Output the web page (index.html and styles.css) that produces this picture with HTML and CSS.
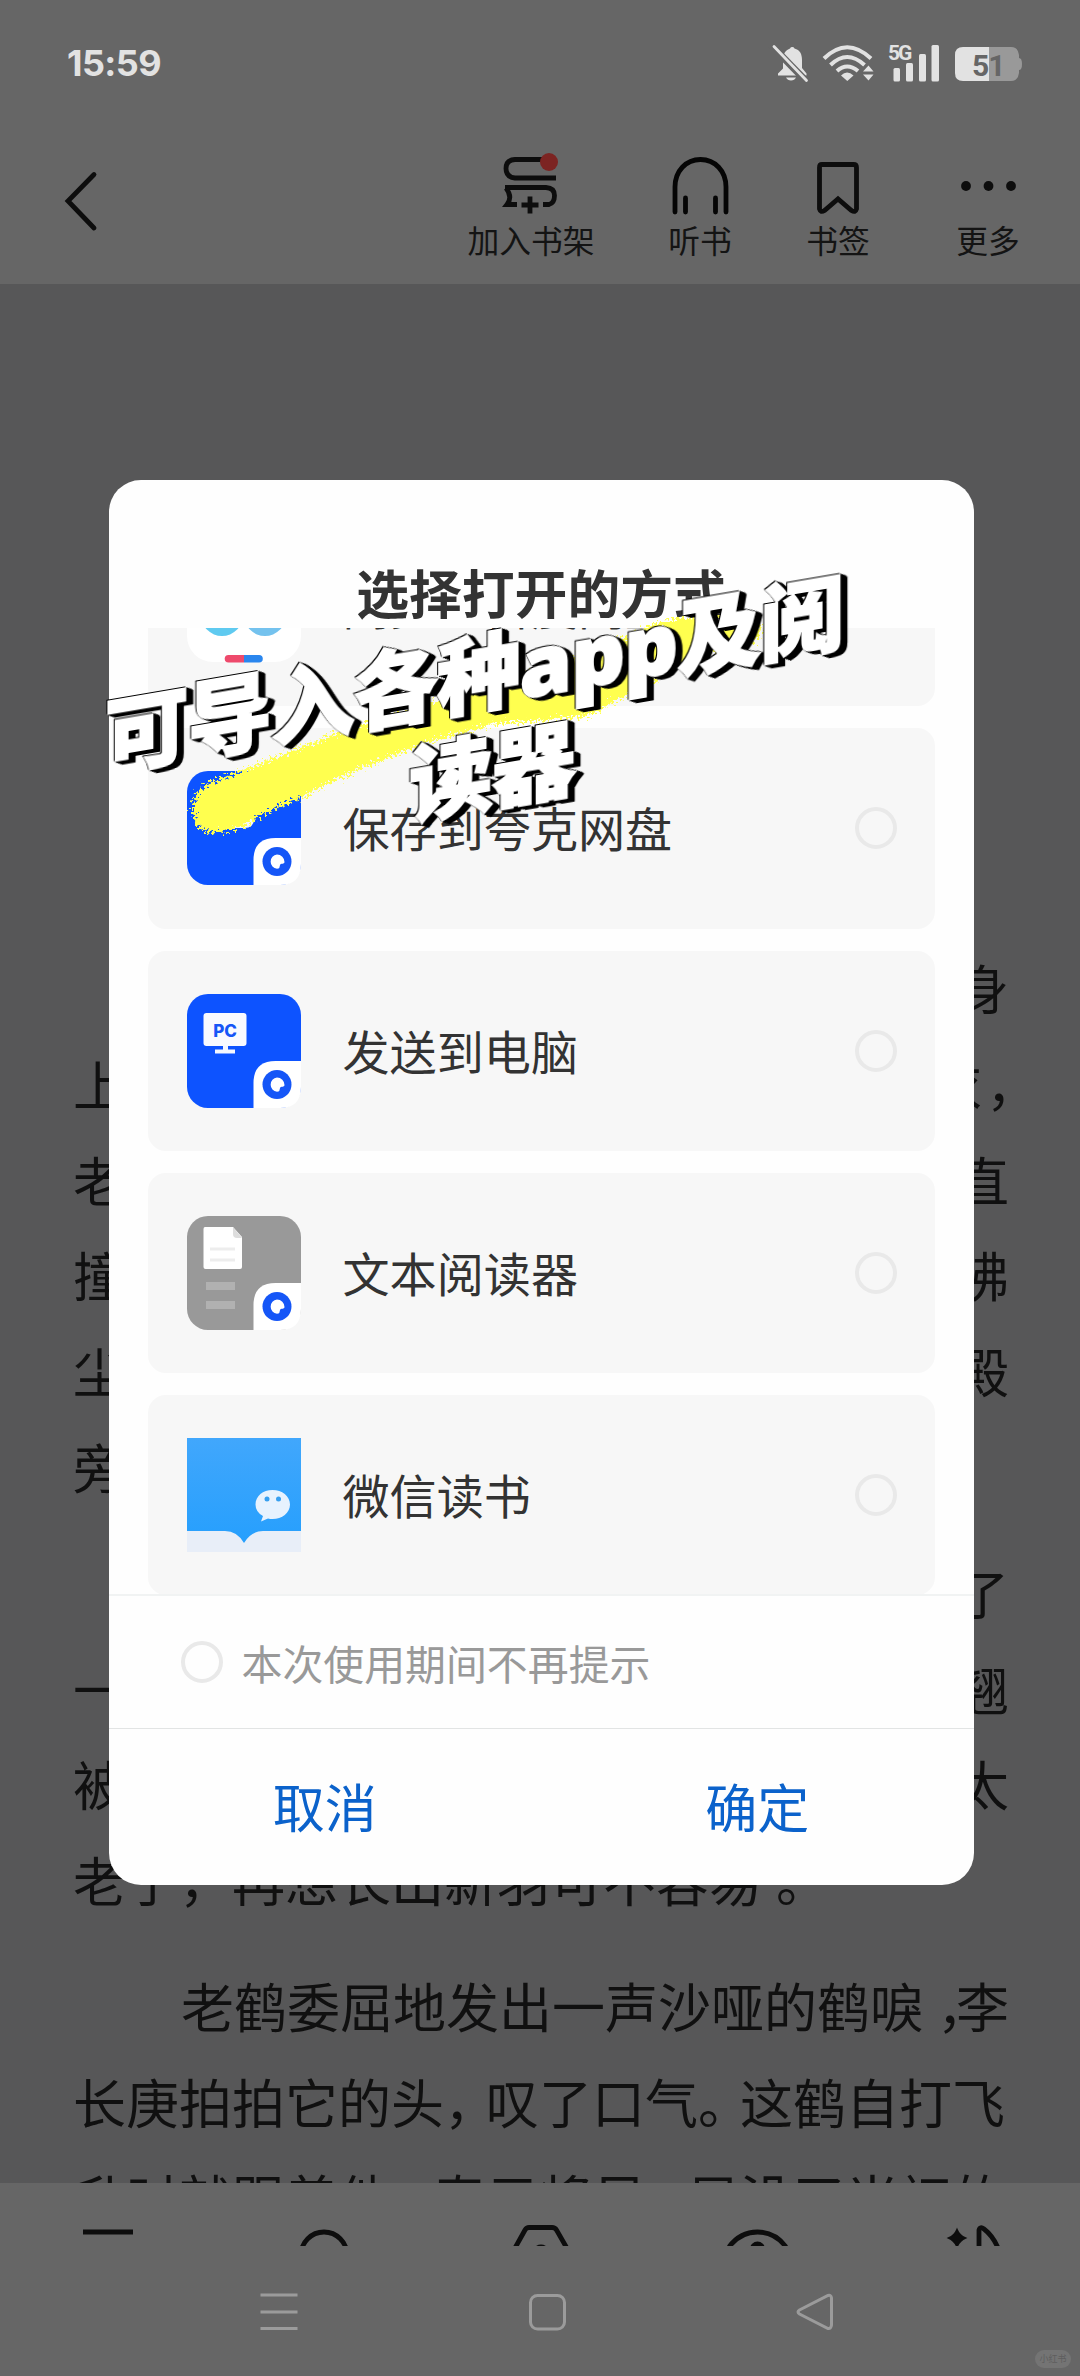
FILE: index.html
```html
<!DOCTYPE html>
<html lang="zh-CN">
<head>
<meta charset="utf-8">
<title>选择打开的方式</title>
<link rel="stylesheet" href="styles.css">
</head>
<body>
<div class="phone">
  <header class="top">
    <div class="status">
      <span class="clock">15:59</span>
      <svg class="status-icons" width="260" height="50" viewBox="766 40 260 50">
        <g fill="#e2e2e2">
          <path d="M777 75.500v-2l5-5V60c0-7 3-10 7-11.500a2.500 2.500 0 0 1 4.500 0C799 50 801 54 801 60v8l4.500 5.500v2z"/>
          <path d="M785 77.500h10q-1.500 3-5 3t-5-3z"/>
          <path d="M770 45L807 83" stroke="#666" stroke-width="7"/>
          <path d="M773 46.500L805.500 80.500" stroke="#e2e2e2" stroke-width="2.800" stroke-linecap="round"/>
          <g fill="none" stroke="#e2e2e2" stroke-width="4">
            <path d="M823 58.500Q846 36 870 58.500"/>
            <path d="M829.500 65Q846 49 863.500 65"/>
            <path d="M836 71Q846 62 857 71"/>
          </g>
          <path d="M840 75.500q6-6 12.500 0L846.300 81z"/>
          <path d="M862 71.500l5.500-6 5 6zM862 74.500h10.500l-5 6z"/>
          <rect x="892.500" y="68" width="6.500" height="13.500" rx="1.500"/>
          <rect x="905" y="63" width="7" height="18.500" rx="1.500"/>
          <rect x="918" y="54" width="7" height="27.500" rx="1.500"/>
          <rect x="930.500" y="45" width="7.500" height="36.500" rx="1.500"/>
          <path d="M962 47h26v34h-26q-8 0-8-8V55q0-8 8-8z"/>
        </g>
        <path d="M988 47h22q7 0 8 8v3q3 0 3 6t-3 6v3q-1 8-8 8h-22z" fill="#999"/>
        <text x="887" y="60" class="net">5G</text>
        <text x="971" y="75.500" class="batt">51</text>
      </svg>
    </div>
    <nav class="tools">
      <svg class="back" width="40" height="70" viewBox="60 166 40 70"><path d="M94 174.500L68 201L94 228"/></svg>
      <div class="tool shelf">
        <svg width="70" height="66" viewBox="496 152 70 66">
          <path d="M555 159.500H515Q506 160 506 168.500T515 178H556"/>
          <path d="M505 187.500H546Q554.500 188 554.500 195.500T549 204.500H543"/>
          <path d="M506 188Q513 197 507 204.500H517"/>
          <path d="M530 196.500V213.500M521.500 205H538.500"/>
          <circle cx="549" cy="162" r="9" fill="#7c2422" stroke="none"/>
        </svg>
        <span>加入书架</span>
      </div>
      <div class="tool listen">
        <svg width="70" height="66" viewBox="665 152 70 66"><path d="M675 212V187C675 171 686 159.500 700.500 159.500S726 171 726 187V212M685.500 198V212M715.500 198V212" stroke-linecap="round" stroke="#050505"/></svg>
        <span>听书</span>
      </div>
      <div class="tool mark">
        <svg width="70" height="66" viewBox="803 152 70 66"><path d="M822 164.500H853.500Q856.500 164.500 856.500 167.500V209Q855.500 213 851.500 210.500L838 199L824.500 210.500Q820.500 213 819.500 209V167.500Q819.500 164.500 822 164.500Z"/></svg>
        <span>书签</span>
      </div>
      <div class="tool more">
        <svg width="70" height="66" viewBox="953 152 70 66"><g fill="#0d0d0d" stroke="none"><circle cx="966" cy="186" r="4.900"/><circle cx="988.500" cy="186" r="4.900"/><circle cx="1011" cy="186" r="4.900"/></g></svg>
        <span>更多</span>
      </div>
    </nav>
  </header>

  <main class="page">
    <div class="para">
      <p class="edge"><span></span><span>身</span></p>
      <p class="edge"><span>上</span><span>衣<i class="far">，</i></span></p>
      <p class="edge"><span>老</span><span>直</span></p>
      <p class="edge"><span>撞</span><span>拂</span></p>
      <p class="edge"><span>尘</span><span>殿</span></p>
      <p class="edge"><span>旁</span><span></span></p>
    </div>
    <div class="para">
      <p class="edge"><span></span><span>了</span></p>
      <p class="edge"><span>一</span><span>翘</span></p>
      <p class="edge"><span>被</span><span>太</span></p>
      <p>老了<i class="full">，</i>再想长出新羽可不容易<i class="full stop">。</i></p>
    </div>
    <div class="para">
      <p class="indent">老鹤委屈地发出一声沙哑的鹤唳<i class="near">，</i>李</p>
      <p>长庚拍拍它的头<i>，</i>叹了口气<i>。</i>这鹤自打飞</p>
      <p>升时就跟着他<i>，</i>寿元将尽<i>，</i>早没了当初的</p>
    </div>
  </main>

  <footer class="bottom">
    <svg class="reader-tools" width="1080" height="63" viewBox="0 2183 1080 63">
      <path d="M83 2232H133"/>
      <circle cx="324" cy="2255" r="23"/>
      <path d="M510 2257L525 2230Q526.500 2227.500 529 2227.500H552Q555 2227.500 556.500 2230L572 2257"/>
      <path d="M533 2252Q541 2242 549 2252" />
      <path d="M729 2247Q740 2232 757.500 2232T786 2247"/>
      <circle cx="757.500" cy="2249" r="7.500" fill="#0a0a0a" stroke="none"/>
      <path d="M957 2229.500Q959.500 2235.500 965.500 2238Q959.500 2240.500 957 2247Q954.500 2240.500 948.500 2238Q954.500 2235.500 957 2229.500Z" fill="#0d0d0d" stroke-width="1.500"/>
      <path d="M979 2250V2230Q980 2226 984 2229Q993 2236 998 2248"/>
    </svg>
    <div class="sysnav">
      <svg width="40" height="40" viewBox="0 0 40 40"><path d="M1.500 3H38.500M1.500 20H38.500M1.500 36.500H38.500"/></svg>
      <svg width="40" height="40" viewBox="0 0 40 40"><rect x="3.500" y="3.500" width="34" height="33.500" rx="7"/></svg>
      <svg width="40" height="40" viewBox="0 0 40 40"><path d="M33 3.500Q36 2.500 36.500 6V33Q36 37 33 36.500L4.500 22Q1.500 20 4.500 18Z"/></svg>
    </div>
    <span class="brand">小红书</span>
  </footer>

  <section class="dialog">
    <h1>选择打开的方式</h1>
    <div class="apps">
      <div class="app">
        <svg width="114" height="114" viewBox="0 0 114 114">
          <rect width="114" height="113" rx="26" fill="#fff"/>
          <circle cx="35" cy="66" r="21" fill="#5fcaf0"/><circle cx="78" cy="66" r="21" fill="#74c2ee"/>
          <path d="M57 106H41.500a3.800 3.800 0 0 0 0 7.600H57z" fill="#ee4a6c"/><path d="M57 106H72a3.800 3.800 0 0 1 0 7.600H57z" fill="#2a86ee"/>
        </svg>
        <span class="name">同步至百度网盘</span><span class="radio"></span>
      </div>
      <div class="app">
        <svg width="114" height="114" viewBox="0 0 114 114">
          <rect width="114" height="114" rx="21" fill="#0d53ff"/>
          <path d="M25 57Q15 57 15 47T26 37Q32 27 43 31Q51 34 52 40Q67 38 67 48Q67 57 57 57Z" fill="#f4f7ff"/>
          <path d="M66.500 114V89Q66.500 67 88.500 67H114V93Q114 114 93 114Z" fill="#fff"/>
          <circle cx="90" cy="90.500" r="14.500" fill="#1556f7"/>
          <path d="M90 83.500a7.500 7.500 0 0 1 7.500 7.500q0 1.800-3 1.800q-1.800 0-1.800 2.500q0 2.500-2.700 2.500a7.200 7.200 0 0 1 0-14.300z" fill="#fff"/>
        </svg>
        <span class="name">保存到夸克网盘</span><span class="radio"></span>
      </div>
      <div class="app">
        <svg width="114" height="114" viewBox="0 0 114 114">
          <rect width="114" height="114" rx="21" fill="#0d53ff"/>
          <rect x="16.500" y="19" width="43" height="33" rx="3" fill="#f8faff"/>
          <path d="M36 52h5v3.500h7v4H28v-4h8z" fill="#f4f7ff"/>
          <text x="38" y="43" class="pc">PC</text>
          <path d="M66.500 114V89Q66.500 67 88.500 67H114V93Q114 114 93 114Z" fill="#fff"/>
          <circle cx="90" cy="90.500" r="14.500" fill="#1556f7"/>
          <path d="M90 83.500a7.500 7.500 0 0 1 7.500 7.500q0 1.800-3 1.800q-1.800 0-1.800 2.500q0 2.500-2.700 2.500a7.200 7.200 0 0 1 0-14.300z" fill="#fff"/>
        </svg>
        <span class="name">发送到电脑</span><span class="radio"></span>
      </div>
      <div class="app">
        <svg width="114" height="114" viewBox="0 0 114 114">
          <rect width="114" height="114" rx="21" fill="#999"/>
          <path d="M18 11H46L55 21V51q0 2-2 2H18.500q-2 0-2-2V13q0-2 1.500-2z" fill="#fff"/>
          <path d="M46 11V18q0 4 4 4h5z" fill="#ddd"/>
          <path d="M23 33H48M23 44H48" stroke="#ededed" stroke-width="3"/>
          <path d="M19 70H48M19 89H48" stroke="#b1b1b1" stroke-width="8"/>
          <path d="M66.500 114V89Q66.500 67 88.500 67H114V93Q114 114 93 114Z" fill="#fff"/>
          <circle cx="90" cy="90.500" r="14.500" fill="#1556f7"/>
          <path d="M90 83.500a7.500 7.500 0 0 1 7.500 7.500q0 1.800-3 1.800q-1.800 0-1.800 2.500q0 2.500-2.700 2.500a7.200 7.200 0 0 1 0-14.300z" fill="#fff"/>
        </svg>
        <span class="name">文本阅读器</span><span class="radio"></span>
      </div>
      <div class="app">
        <svg width="114" height="114" viewBox="0 0 114 114">
          <defs><linearGradient id="sky" x2="0" y2="1"><stop stop-color="#41a7fc"/><stop offset="1" stop-color="#269ffd"/></linearGradient></defs>
          <rect width="114" height="114" fill="#e8eef8"/>
          <path d="M0 0H114V93H76Q64 93 57 105Q50 93 38 93H0Z" fill="url(#sky)"/>
          <path d="M85.500 52C76 52 68.500 58 68.500 66.500Q68.500 74 76 78L74 83.500L81 80.500Q83 81 85.500 81C95 81 103 75 103 66.500S95 52 85.500 52Z" fill="#e7f2fe"/>
          <circle cx="80" cy="61" r="2.500" fill="#379ff0"/><circle cx="91.500" cy="61" r="2.500" fill="#379ff0"/>
        </svg>
        <span class="name">微信读书</span><span class="radio"></span>
      </div>
    </div>
    <div class="remember"><span class="radio"></span><span>本次使用期间不再提示</span></div>
    <div class="actions"><span>取消</span><span>确定</span></div>
  </section>

  <svg class="brush" width="640" height="250" viewBox="170 600 640 250">
    <defs><filter id="rough" x="-5%" y="-10%" width="110%" height="120%">
      <feTurbulence type="fractalNoise" baseFrequency="0.4" numOctaves="2" seed="4"/>
      <feDisplacementMap in="SourceGraphic" scale="18" xChannelSelector="R" yChannelSelector="G"/>
    </filter></defs>
    <path filter="url(#rough)" fill="#ffff50" d="M193 808Q194 786 215 781Q290 752 350 728Q430 704 530 672Q600 650 660 622Q700 612 758 622Q766 632 752 642Q700 650 665 675Q630 694 587 716Q530 722 488 725Q472 732 456 734Q420 744 388 758Q330 780 300 799Q270 808 245 826Q220 834 206 832Q192 826 193 808Z"/>
  </svg>
  <div class="caption"><div>可导入各种app及阅</div><div class="second">读器</div></div>
</div>
</body>
</html>
```
FILE: styles.css
```css
body {
  margin: 0;
  font-family: Inter, "Noto Sans CJK SC", sans-serif;
}

.phone {
  position: relative;
  display: flex;
  flex-direction: column;
  width: 1080px;
  height: 2376px;
  overflow: hidden;
  background: #575758;
}

.top {
  box-sizing: border-box;
  flex: none;
  height: 284px;
  padding-top: 40px;
  background: #666;
}

.status {
  display: flex;
  justify-content: space-between;
  height: 50px;
  padding: 0 53px 0 67px;
}

.clock {
  color: #e2e2e2;
  font: 700 36px/46px Inter, sans-serif;
  letter-spacing: -0.600px;
}

.net {
  fill: #e2e2e2;
  font: 700 21px "Liberation Sans Narrow", Roboto, sans-serif;
  letter-spacing: -2px;
}

.batt {
  fill: #666;
  font: 700 30px Roboto, sans-serif;
  letter-spacing: -1px;
}

.tools {
  display: flex;
  align-items: flex-start;
  padding: 62px 28px 0 60px;
}

.back {
  margin-top: 14px;
  margin-right: 367px;
}

.tools svg,
.reader-tools {
  fill: none;
  stroke: #0d0d0d;
  stroke-width: 4.800;
}

.back path {
  stroke-linecap: round;
}

.tool {
  display: flex;
  flex-direction: column;
  align-items: center;
  gap: 3px;
  width: 128px;
  color: #141414;
  font-size: 31.800px;
  line-height: 42px;
}

.listen { margin-left: 41px; }
.mark { margin-left: 10px; }
.more { margin-left: 22px; }

.page {
  display: flex;
  flex: 1;
  flex-direction: column;
  gap: 30px;
  min-height: 0;
  padding: 656px 71px 0 73px;
  overflow: hidden;
  color: #101010;
  font: 53px/95.800px "Noto Sans CJK SC", sans-serif;
  white-space: nowrap;
}

.page p {
  margin: 0;
  height: 95.800px;
}

.page i {
  display: inline-block;
  width: 42px;
  font-style: normal;
}

.page .full { width: 53px; }
.page .stop { text-indent: 14px; }
.page .far { text-indent: 4px; width: 27px; }
.page .near { box-sizing: border-box; width: 33px; text-indent: 14px; }
.page .indent { padding-left: 108px; }

.page .edge {
  display: flex;
  justify-content: space-between;
}

.bottom {
  position: relative;
  flex: none;
  height: 193px;
  background: #666;
}

.reader-tools {
  display: block;
}

.sysnav {
  display: flex;
  justify-content: space-between;
  width: 576px;
  padding: 46px 0 0 259px;
}

.sysnav svg {
  fill: none;
  stroke: #9b9b9b;
  stroke-width: 3;
}

.brand {
  position: absolute;
  right: 9px;
  bottom: 8px;
  width: 36px;
  border-radius: 9px;
  background: #747474;
  color: #5e5e5e;
  font-size: 9px;
  line-height: 18px;
  text-align: center;
}

.dialog {
  position: absolute;
  top: 480px;
  left: 108.500px;
  display: flex;
  flex-direction: column;
  width: 865px;
  height: 1405px;
  overflow: hidden;
  border-radius: 32px;
  background: #fefefe;
}

.dialog h1 {
  flex: none;
  height: 69px;
  margin: 0;
  padding-top: 79px;
  color: #333;
  font: 700 52.800px/64px "Noto Sans CJK SC", sans-serif;
  text-align: center;
}

.apps {
  display: flex;
  flex: none;
  flex-direction: column;
  gap: 22px;
  box-sizing: border-box;
  height: 968px;
  padding: 0 39px;
  overflow: hidden;
  border-bottom: 2px solid #f1f3f3;
}

.app {
  display: flex;
  flex: none;
  align-items: center;
  box-sizing: border-box;
  height: 200.300px;
  padding: 0 38px 0 39px;
  border-radius: 18px;
  background: #f7f7f7;
}

.app:first-child {
  margin-top: -122px;
}

.name {
  flex: 1;
  margin-left: 42px;
  padding-top: 4px;
  color: #333;
  font-size: 47.100px;
  line-height: 60px;
}

.radio {
  box-sizing: border-box;
  width: 42px;
  height: 42px;
  border: 4px solid #e9e9e9;
  border-radius: 50%;
}

.pc {
  fill: #1556f7;
  font: 800 17px Inter, sans-serif;
  text-anchor: middle;
}

.remember {
  display: flex;
  flex: none;
  align-items: center;
  gap: 19px;
  height: 132px;
  padding-left: 72px;
  border-bottom: 1.500px solid #e2e4e4;
  color: #999;
  font-size: 40.900px;
}

.actions {
  display: grid;
  flex: 1;
  grid-template-columns: 1fr 1fr;
  align-items: center;
  padding-bottom: 3px;
  color: #0b62cb;
  font-size: 52px;
  text-align: center;
}

.brush {
  position: absolute;
  top: 600px;
  left: 170px;
}

.caption {
  position: absolute;
  top: 624px;
  left: 104px;
  width: 740px;
  color: #fff;
  font: 900 84px/100px "Open Sans", "Noto Sans CJK SC", sans-serif;
  letter-spacing: -1px;
  text-align: center;
  white-space: nowrap;
  transform: skewY(-9.700deg);
  -webkit-text-stroke: 2px #fff;
  filter: drop-shadow(1px 1px 0 #000) drop-shadow(-1px -1px 0 #000) drop-shadow(2px 1px 0 #000) drop-shadow(4px 2px 0 #000);
}

.second {
  padding-left: 36px;
}
```
